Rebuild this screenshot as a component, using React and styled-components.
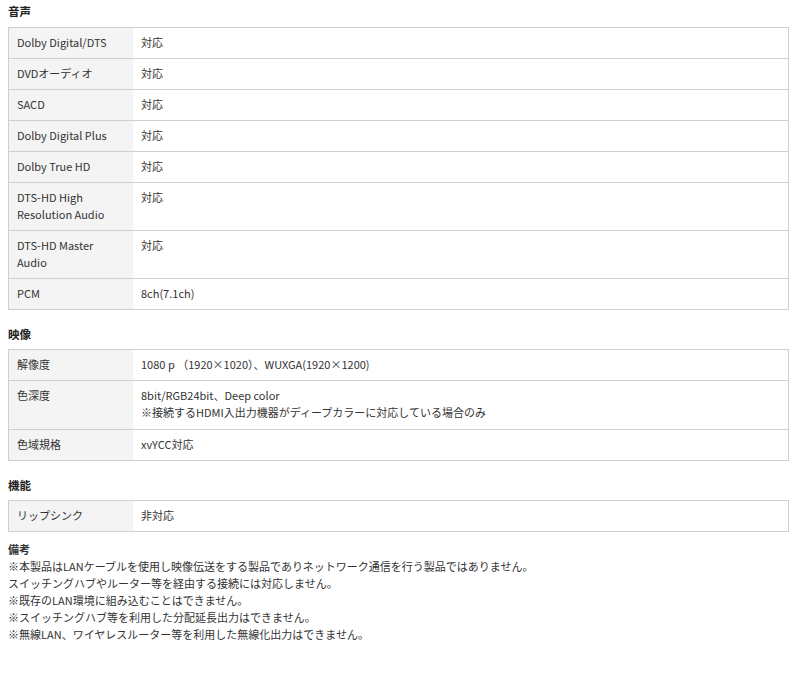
import React from "react";
import styled, { createGlobalStyle } from "styled-components";

const Global = createGlobalStyle`
  body {
    margin: 0;
    background: #fff;
    font-family: "Noto Sans CJK JP", "Noto Sans", sans-serif;
    color: #333;
  }
`;

const Page = styled.div`
  padding: 0 10px 0 8px;
`;

const Title = styled.h3`
  margin: 0;
  height: ${(p) => (p.first ? 27 : 39)}px;
  display: flex;
  align-items: flex-end;
  padding-bottom: ${(p) => (p.first ? 8 : 7)}px;
  box-sizing: border-box;
  font-size: 11.5px;
  font-weight: 700;
  color: #222;
`;

const Table = styled.div`
  border: 1px solid #cfcfcf;
  border-bottom: none;
`;

const Row = styled.div`
  display: grid;
  grid-template-columns: 124px 1fr;
  min-height: ${(p) => p.h || 30}px;
  border-bottom: 1px solid #cfcfcf;
`;

const Label = styled.div`
  background: #f4f4f4;
  padding: 6px 8px 0 8px;
  font-size: 11px;
  line-height: 17px;
`;

const Value = styled.div`
  padding: 6px 8px 0 8px;
  font-size: 11px;
  line-height: 17px;
`;

const NotesTitle = styled.div`
  margin-top: 9px;
  font-size: 11px;
  font-weight: 700;
  line-height: 17px;
`;

const Note = styled.div`
  font-size: 11px;
  line-height: 17px;
`;

const sections = [
  {
    title: "音声",
    rows: [
      ["Dolby Digital/DTS", "対応"],
      ["DVDオーディオ", "対応"],
      ["SACD", "対応"],
      ["Dolby Digital Plus", "対応"],
      ["Dolby True HD", "対応"],
      [["DTS-HD High", "Resolution Audio"], "対応", 47],
      [["DTS-HD Master", "Audio"], "対応", 47],
      ["PCM", "8ch(7.1ch)"],
    ],
  },
  {
    title: "映像",
    rows: [
      ["解像度", "1080 p （1920×1020）、WUXGA(1920×1200)"],
      ["色深度", ["8bit/RGB24bit、Deep color", "※接続するHDMI入出力機器がディープカラーに対応している場合のみ"], 48],
      ["色域規格", "xvYCC対応"],
    ],
  },
  {
    title: "機能",
    rows: [["リップシンク", "非対応"]],
  },
];

const notes = [
  "※本製品はLANケーブルを使用し映像伝送をする製品でありネットワーク通信を行う製品ではありません。",
  "スイッチングハブやルーター等を経由する接続には対応しません。",
  "※既存のLAN環境に組み込むことはできません。",
  "※スイッチングハブ等を利用した分配延長出力はできません。",
  "※無線LAN、ワイヤレスルーター等を利用した無線化出力はできません。",
];

const lines = (v) => (Array.isArray(v) ? v.map((l, i) => <div key={i}>{l}</div>) : v);

export default function App() {
  return (
    <Page>
      <Global />
      {sections.map((s, si) => (
        <React.Fragment key={s.title}>
          <Title first={si === 0}>{s.title}</Title>
          <Table>
            {s.rows.map(([l, v, h], i) => (
              <Row key={i} h={h}>
                <Label>{lines(l)}</Label>
                <Value>{lines(v)}</Value>
              </Row>
            ))}
          </Table>
        </React.Fragment>
      ))}
      <NotesTitle>備考</NotesTitle>
      {notes.map((n) => (
        <Note key={n}>{n}</Note>
      ))}
    </Page>
  );
}
